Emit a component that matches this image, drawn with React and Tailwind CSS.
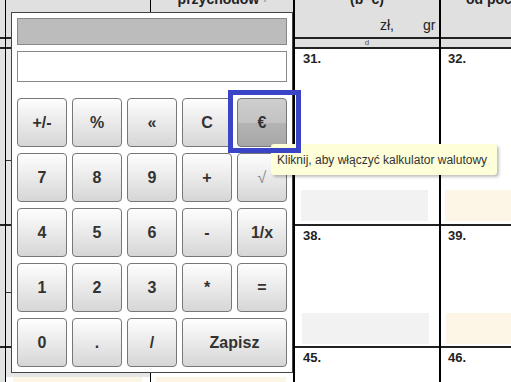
import React from 'react';

const keys = [
  ['+/-', '%', '«', 'C', '€'],
  ['7', '8', '9', '+', '√'],
  ['4', '5', '6', '-', '1/x'],
  ['1', '2', '3', '*', '='],
  ['0', '.', '/', 'Zapisz'],
];

const Line = ({ thin }) => (
  <div className={thin ? 'h-px bg-[#333]' : 'h-[2px] bg-[#222]'} />
);

const CalcKey = ({ label }) => {
  if (label === '€') {
    return (
      <button className="h-[49px] rounded-[4px] border border-[#777] bg-[linear-gradient(#cecece,#c3c3c3_50%,#b4b4b4_50%,#a7a7a7)] text-[16px] font-bold text-[#333] flex items-center justify-center">
        €
      </button>
    );
  }
  if (label === '√') {
    return (
      <button className="h-[49px] rounded-[4px] border border-[#777] bg-gradient-to-b from-[#fefefe] to-[#d6d6d6] text-[16px] text-[#888] flex items-center justify-center">
        √
      </button>
    );
  }
  return (
    <button
      className={`h-[49px] rounded-[4px] border border-[#777] bg-gradient-to-b from-[#fefefe] to-[#d6d6d6] text-[16px] font-bold text-[#333] flex items-center justify-center ${
        label === 'Zapisz' ? 'col-span-2' : ''
      }`}
    >
      {label}
    </button>
  );
};

export default function App() {
  return (
    <div className="relative w-[511px] h-[382px] overflow-hidden bg-white font-['Liberation_Sans',Arial,sans-serif] text-[#222]">
      {/* form behind the popup */}
      <div className="flex h-full">
        {/* col A */}
        <div className="w-[6px] shrink-0 flex flex-col border-r border-black bg-[#e2e2e2]">
          <div className="h-[37px]" />
          <Line />
          <div className="h-[8px]" />
          <Line />
          <div className="h-[175px]" />
          <Line />
          <div className="h-[120px]" />
          <Line />
          <div className="flex-1" />
        </div>

        {/* col B */}
        <div className="w-[145px] shrink-0 flex flex-col border-r border-black">
          <div className="h-[37px] bg-[#e0e0e0]" />
          <Line />
          <div className="h-[8px] bg-[#e0e0e0]" />
          <Line />
          <div className="h-[111px] bg-[#e6e6e6]" />
          <Line thin />
          <div className="h-[63px] bg-[#e6e6e6]" />
          <Line />
          <div className="h-[66px] bg-[#e6e6e6]" />
          <Line thin />
          <div className="h-[53px] bg-[#e6e6e6]" />
          <Line />
          <div className="flex-1 flex flex-col">
            <div className="h-[29px] bg-[#e6e6e6]" />
            <div className="flex-1 ml-[7px] mr-[8px] bg-[#fdf6e6]" />
          </div>
        </div>

        {/* col C */}
        <div className="w-[144px] shrink-0 flex flex-col border-r-2 border-black">
          <div className="h-[37px] bg-[#e0e0e0] text-center whitespace-nowrap">
            <div className="-mt-[9px] leading-[16px] text-[14px] font-bold">
              przychodów<sup className="text-[8px] font-normal text-[#555]">1)</sup>
            </div>
          </div>
          <Line />
          <div className="h-[8px] bg-[#e0e0e0]" />
          <Line />
          <div className="flex-1 flex flex-col justify-end">
            <div className="h-[5px] ml-[5px] mr-[7px] bg-[#fdf6e6]" />
          </div>
        </div>

        {/* col D */}
        <div className="w-[146px] shrink-0 flex flex-col border-r-2 border-black">
          <div className="h-[37px] bg-[#e0e0e0] flex flex-col">
            <div className="-mt-[9px] leading-[16px] text-[14px] font-bold text-center">(b−c)</div>
            <div className="mt-[10px] flex text-[14px] leading-[16px] pl-[85px]">
              <span>zł,</span>
              <span className="ml-[29px]">gr</span>
            </div>
          </div>
          <Line />
          <div className="h-[8px] bg-[#e0e0e0] text-center text-[8px] leading-[8px] text-[#555]">d</div>
          <Line />
          <div className="h-[175px] flex flex-col">
            <div className="pt-[2px] pl-[8px] text-[13px] leading-[15px] font-bold">31.</div>
            <div className="flex-1" />
            <div className="h-[31px] ml-[6px] w-[127px] mb-[3px] bg-[#f2f2f2]" />
          </div>
          <Line />
          <div className="h-[120px] flex flex-col">
            <div className="pt-[2px] pl-[8px] text-[13px] leading-[15px] font-bold">38.</div>
            <div className="flex-1" />
            <div className="h-[31px] ml-[7px] w-[127px] mb-[2px] bg-[#f2f2f2]" />
          </div>
          <Line />
          <div className="flex-1">
            <div className="pt-[2px] pl-[8px] text-[13px] leading-[15px] font-bold">45.</div>
          </div>
        </div>

        {/* col E */}
        <div className="flex-1 min-w-0 overflow-hidden flex flex-col">
          <div className="h-[37px] bg-[#e0e0e0] whitespace-nowrap">
            <div className="-mt-[9px] leading-[16px] text-[14px] font-bold pl-[25px]">od początku</div>
          </div>
          <Line />
          <div className="h-[8px] bg-[#e0e0e0]" />
          <Line />
          <div className="h-[175px] flex flex-col">
            <div className="pt-[2px] pl-[7px] text-[13px] leading-[15px] font-bold">32.</div>
            <div className="flex-1" />
            <div className="h-[31px] ml-[4px] mb-[3px] bg-[#fdf6e6]" />
          </div>
          <Line />
          <div className="h-[120px] flex flex-col">
            <div className="pt-[2px] pl-[7px] text-[13px] leading-[15px] font-bold">39.</div>
            <div className="flex-1" />
            <div className="h-[31px] ml-[5px] mb-[2px] bg-[#fdf6e6]" />
          </div>
          <Line />
          <div className="flex-1">
            <div className="pt-[2px] pl-[7px] text-[13px] leading-[15px] font-bold">46.</div>
          </div>
        </div>
      </div>

      {/* calculator popup */}
      <div className="absolute left-[11px] top-[12px] w-[282px] h-[361px] border border-[#444] bg-white p-[5px] flex flex-col">
        <div className="h-[27px] border border-[#888] bg-[#bcbcbc]" />
        <div className="mt-[6px] h-[31px] border border-[#888] bg-white" />
        <div className="mt-[16px] grid grid-cols-5 gap-x-[5px] gap-y-[6px]">
          {keys.flat().map((k) => (
            <CalcKey key={k} label={k} />
          ))}
        </div>
      </div>

      {/* tooltip */}
      <div className="absolute left-[271px] top-[144px] w-[226px] h-[31px] rounded-[3px] bg-[#fefed9] shadow-[2px_2px_3px_rgba(0,0,0,0.25)] flex items-center pl-[6px] text-[12px] text-[#333] whitespace-nowrap">
        Kliknij, aby włączyć kalkulator walutowy
      </div>

      {/* highlight frame */}
      <div className="absolute left-[228px] top-[90px] w-[73px] h-[63px] border-[5px] border-[#3a44c6]" />
    </div>
  );
}
